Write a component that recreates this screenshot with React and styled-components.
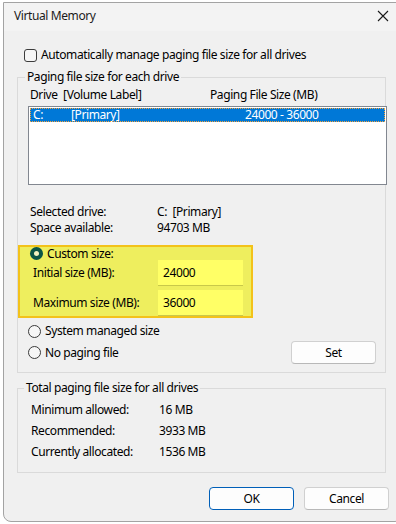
import React from "react";
import styled, { createGlobalStyle } from "styled-components";

const Global = createGlobalStyle`
  html, body { margin: 0; padding: 0; background: #ffffff; }
  body {
    width: 396px; height: 524px; overflow: hidden;
    font-family: "Noto Sans", "Liberation Sans", sans-serif;
    font-size: 12px; line-height: 16px; letter-spacing: -0.4px; color: #000;
  }
`;

const Page = styled.div`
  width: 396px;
  height: 524px;
  padding: 2px 0 0 3px;
  box-sizing: border-box;
  overflow: hidden;
`;

const Window = styled.div`
  width: 400px;
  height: 520px;
  box-sizing: border-box;
  border: 1px solid #a3a3a3;
  border-radius: 0 0 8px 8px;
  background: #f0f0f0;
  display: flex;
  flex-direction: column;
  overflow: hidden;
`;

const TitleBar = styled.div`
  height: 28px;
  box-sizing: border-box;
  padding: 0 12px 3px 10px;
  background: #f3f3f3;
  display: flex;
  align-items: center;
  justify-content: space-between;
  flex-shrink: 0;
`;

const Title = styled.span`
  color: #1b1b1b;
`;

const Close = styled.span`
  display: flex;
  width: 16px;
  height: 16px;
  align-items: center;
  justify-content: center;
  margin-right: -1px;
`;

const Body = styled.div`
  padding: 16px 13px 0 13px;
  display: flex;
  flex-direction: column;
`;

const CheckRow = styled.label`
  display: flex;
  align-items: center;
  height: 16px;
  padding-left: 7px;
  gap: 4px;
`;

const Box = styled.span`
  width: 13px;
  height: 13px;
  box-sizing: border-box;
  border: 1px solid #3c3c3c;
  border-radius: 3px;
  background: #f6f6f6;
`;

const Group = styled.fieldset`
  margin: ${(p) => p.$top}px 0 0 0;
  padding: 0 0 ${(p) => p.$bottom}px 10px;
  border: 1px solid #dadada;
  min-width: 0;
  width: 369px;
  box-sizing: border-box;
`;

const Legend = styled.legend`
  padding: 0 2px;
  margin-left: ${(p) => p.$shift}px;
  line-height: 16px;
`;

const HeaderRow = styled.div`
  display: grid;
  grid-template-columns: ${(p) => p.$cols};
  height: 16px;
  margin-top: 2px;
  padding-left: 2px;
`;

const ListBox = styled.div`
  margin-top: 3px;
  margin-right: -2px;
  height: 79px;
  box-sizing: border-box;
  border: 1px solid #828790;
  background: #fff;
  padding: 1px;
`;

const ListItem = styled.div`
  height: 14px;
  line-height: 14px;
  background: #0078d7;
  color: #fff;
  outline: 1px dotted #f7a23a;
  outline-offset: -1px;
  display: grid;
  grid-template-columns: 38px 174px auto;
  padding-left: 3px;
`;

const InfoGrid = styled.div`
  display: grid;
  grid-template-columns: ${(p) => p.$label}px auto;
  row-gap: ${(p) => p.$gap}px;
  margin-top: ${(p) => p.$top}px;
  padding-left: ${(p) => p.$indent}px;
`;

const Highlight = styled.div`
  margin: 9px 0 0 -10px;
  width: 235px;
  box-sizing: border-box;
  border: 2px solid #f3c21a;
  background: #eeee5e;
  padding: 0 8px 0 10px;
  display: flex;
  flex-direction: column;
`;

const RadioRow = styled.div`
  display: flex;
  align-items: center;
  gap: 4px;
  height: ${(p) => p.$h}px;
`;

const Radio = styled.span`
  width: 13px;
  height: 13px;
  box-sizing: border-box;
  border-radius: 50%;
  border: ${(p) => (p.$on ? "none" : "1px solid #3a3a3a")};
  background: ${(p) => (p.$on ? "#0b5646" : "#f6f6f6")};
  display: flex;
  align-items: center;
  justify-content: center;
  &::after {
    content: "";
    display: ${(p) => (p.$on ? "block" : "none")};
    width: 5px;
    height: 5px;
    border-radius: 50%;
    background: #f3f3c0;
  }
`;

const SizeRow = styled.div`
  display: grid;
  grid-template-columns: 125px 85px;
  align-items: center;
  padding-left: 3px;
  margin-top: ${(p) => p.$top || 0}px;
`;

const Input = styled.div`
  height: 26px;
  box-sizing: border-box;
  background: #ffff66;
  border-bottom: 1px solid #c8c84a;
  padding-left: 5px;
  display: flex;
  align-items: center;
`;

const Options = styled.div`
  display: flex;
  flex-direction: column;
  gap: 2px;
  margin-top: 5px;
`;

const OptionLine = styled.div`
  display: flex;
  align-items: center;
  justify-content: space-between;
  padding-right: 9px;
`;

const Button = styled.button`
  width: 85px;
  height: 23px;
  box-sizing: border-box;
  border-radius: 4px;
  border: 1px solid ${(p) => (p.$primary ? "#005fb8" : "#d0d0d0")};
  border-bottom-color: ${(p) => (p.$primary ? "#005fb8" : "#b8b8b8")};
  background: #fdfdfd;
  font-family: inherit;
  font-size: 12px;
  letter-spacing: inherit;
  color: #000;
  padding: 0;
`;

const Footer = styled.div`
  display: flex;
  justify-content: flex-end;
  gap: 10px;
  margin: 14px 0 0 0;
`;

export default function App() {
  return (
    <Page>
      <Global />
      <Window>
        <TitleBar>
          <Title>Virtual Memory</Title>
          <Close>
            <svg width="12" height="12" viewBox="0 0 12 12">
              <path d="M1 1 L11 11 M11 1 L1 11" stroke="#1a1a1a" strokeWidth="1.1" fill="none" />
            </svg>
          </Close>
        </TitleBar>
        <Body>
          <CheckRow>
            <Box />
            <span>Automatically manage paging file size for all drives</span>
          </CheckRow>

          <Group $top={6} $bottom={8}>
            <Legend $shift={-3}>Paging file size for each drive</Legend>
            <HeaderRow $cols="180px auto">
              <span>Drive&nbsp; [Volume Label]</span>
              <span>Paging File Size (MB)</span>
            </HeaderRow>
            <ListBox>
              <ListItem>
                <span>C:</span>
                <span>[Primary]</span>
                <span>24000 - 36000</span>
              </ListItem>
            </ListBox>
            <InfoGrid $label={127} $gap={0} $top={19} $indent={2}>
              <span>Selected drive:</span>
              <span>C:&nbsp; [Primary]</span>
              <span>Space available:</span>
              <span>94703 MB</span>
            </InfoGrid>
            <Highlight>
              <RadioRow $h={13}>
                <Radio $on />
                <span>Custom size:</span>
              </RadioRow>
              <SizeRow>
                <span>Initial size (MB):</span>
                <Input>24000</Input>
              </SizeRow>
              <SizeRow $top={4}>
                <span>Maximum size (MB):</span>
                <Input>36000</Input>
              </SizeRow>
            </Highlight>
            <Options>
              <RadioRow $h={16}>
                <Radio />
                <span>System managed size</span>
              </RadioRow>
              <OptionLine>
                <RadioRow $h={16}>
                  <Radio />
                  <span>No paging file</span>
                </RadioRow>
                <Button>Set</Button>
              </OptionLine>
            </Options>
          </Group>

          <Group $top={7} $bottom={12}>
            <Legend $shift={-4}>Total paging file size for all drives</Legend>
            <InfoGrid $label={128} $gap={5} $top={6} $indent={3}>
              <span>Minimum allowed:</span>
              <span>16 MB</span>
              <span>Recommended:</span>
              <span>3933 MB</span>
              <span>Currently allocated:</span>
              <span>1536 MB</span>
            </InfoGrid>
          </Group>

          <Footer>
            <Button $primary>OK</Button>
            <Button>Cancel</Button>
          </Footer>
        </Body>
      </Window>
    </Page>
  );
}
